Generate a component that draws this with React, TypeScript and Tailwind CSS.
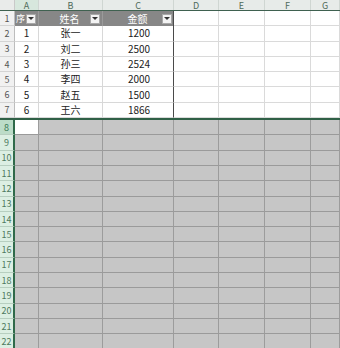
import React from "react";

const cols = ["A", "B", "C", "D", "E", "F", "G"];
const widths = ["w-[24px]", "w-[64px]", "w-[71px]", "w-[45px]", "w-[46px]", "w-[46px]", "w-[29px]"];

const data: [string, string, string][] = [
    ["1", "张一", "1200"],
    ["2", "刘二", "2500"],
    ["3", "孙三", "2524"],
    ["4", "李四", "2000"],
    ["5", "赵五", "1500"],
    ["6", "王六", "1866"],
];

function FilterButton() {
    return (
        <div className="w-[10px] h-[10px] bg-[#f3f3f3] border border-[#a8a8a8] flex items-center justify-center shrink-0">
            <div className="w-0 h-0 border-l-[3px] border-r-[3px] border-t-[3px] border-l-transparent border-r-transparent border-t-[#333]" />
        </div>
    );
}

export default function App() {
    const font = { fontFamily: '"Noto Sans CJK SC", "Liberation Sans", sans-serif' };

    return (
        <div className="w-[340px] h-[348px] overflow-hidden bg-white text-[10px] leading-none" style={font}>
            {/* column headers */}
            <div className="flex h-[11px] border-b border-[#3f6150]">
                <div className="w-[15px] shrink-0 bg-[#e9ebea] border-r border-[#c9c9c9]" />
                {cols.map((c, i) => (
                    <div
                        key={c}
                        className={`${widths[i]} shrink-0 flex items-center justify-center text-[9px] text-[#4f6a5a] border-r border-[#cfd6d2] ${i === 0 ? "bg-[#d7e7dd]" : "bg-[#e7ebe9]"}`}
                    >
                        {c}
                    </div>
                ))}
            </div>

            {/* row 1: table header */}
            <div className="flex h-[15.3px]">
                <div className="w-[15px] shrink-0 bg-[#f1f1f1] border-r border-[#bdbdbd] border-b border-b-[#d4d4d4] flex items-center justify-center text-[9px] text-[#555]">
                    1
                </div>
                <div className="w-[24px] shrink-0 bg-[#878787] flex items-center pl-[1px] gap-[1px] border-r border-[#9a9a9a]">
                    <span className="text-white text-[9px]">序</span>
                    <FilterButton />
                </div>
                <div className="w-[64px] shrink-0 bg-[#878787] flex items-center border-r border-[#9a9a9a] pr-[2px]">
                    <span className="flex-1 text-center text-white pl-[10px]">姓名</span>
                    <FilterButton />
                </div>
                <div className="w-[71px] shrink-0 bg-[#878787] flex items-center border-r border-[#4a4a4a] pr-[1px]">
                    <span className="flex-1 text-center text-white pl-[10px]">金额</span>
                    <FilterButton />
                </div>
                {[3, 4, 5, 6].map((i) => (
                    <div key={i} className={`${widths[i]} shrink-0 border-r border-b border-[#dadada]`} />
                ))}
            </div>

            {/* rows 2-7 */}
            {data.map((r, idx) => (
                <div key={idx} className="flex h-[15.3px]">
                    <div className="w-[15px] shrink-0 bg-[#f1f1f1] border-r border-[#bdbdbd] border-b border-b-[#d4d4d4] flex items-center justify-center text-[9px] text-[#555]">
                        {idx + 2}
                    </div>
                    <div className="w-[24px] shrink-0 flex items-center justify-center border-r border-b border-[#d8d8d8] text-[#222]">
                        {r[0]}
                    </div>
                    <div className="w-[64px] shrink-0 flex items-center justify-center border-r border-b border-[#d8d8d8] text-[#222]">
                        {r[1]}
                    </div>
                    <div className="w-[71px] shrink-0 flex items-center justify-center border-r border-r-[#4a4a4a] border-b border-b-[#d8d8d8] text-[#222] pl-[2px]">
                        {r[2]}
                    </div>
                    {[3, 4, 5, 6].map((i) => (
                        <div key={i} className={`${widths[i]} shrink-0 border-r border-b border-[#dadada]`} />
                    ))}
                </div>
            ))}

            {/* selected rows 8-22 */}
            <div className="border-t-2 border-[#2f6046]">
                {Array.from({ length: 15 }, (_, k) => k + 8).map((n) => (
                    <div key={n} className="flex h-[15.3px]">
                        <div
                            className={`w-[15px] shrink-0 border-r-2 border-r-[#2f6a4a] border-b border-b-[#b7cfc0] flex items-center justify-center text-[9px] ${n === 8 ? "bg-[#bcdcc8] text-[#3a7a55]" : "bg-[#dcefe3] text-[#4d7a60]"}`}
                        >
                            {n}
                        </div>
                        {cols.map((c, i) => (
                            <div
                                key={c}
                                className={`${widths[i]} shrink-0 border-r border-b border-r-[#9c9c9c] border-b-[#9a9a9a] ${n === 8 && i === 0 ? "bg-white" : "bg-[#c6c6c6]"}`}
                            />
                        ))}
                    </div>
                ))}
            </div>
        </div>
    );
}
